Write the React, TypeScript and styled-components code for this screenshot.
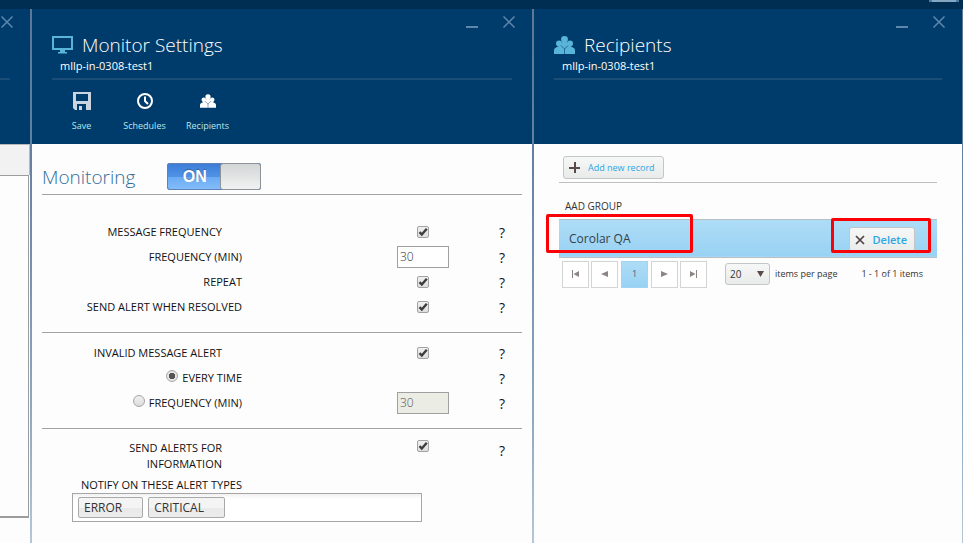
import React, { useId, useState } from "react";
import styled, { createGlobalStyle, css } from "styled-components";

const Global = createGlobalStyle`
  *, *::before, *::after { box-sizing: border-box; }
  html, body, #root { height: 100%; }
  body {
    margin: 0;
    overflow: hidden;
    background: #fdfdfd;
    color: #111;
    font-family: "Open Sans", "Noto Sans", sans-serif;
    font-size: 12px;
    line-height: 16px;
  }
  button, input, select { font: inherit; color: inherit; margin: 0; }
  button { cursor: pointer; }
`;

const Page = styled.div`
  display: grid;
  grid-template-rows: 9px 1fr;
  min-height: 100%;
`;

const TopBar = styled.div`
  display: flex;
  justify-content: flex-end;
  padding-right: 4px;
  background: #002e53;
`;

const TopHandle = styled.span`
  width: 30px;
  height: 2px;
  background: #84a5c4;
  border: solid #4f7ba3;
  border-width: 0 3px;
`;

const Blades = styled.div`
  display: grid;
  grid-template-columns: 30px 2px minmax(0, 500fr) 2px minmax(0, 428fr) 1px;
`;

const Divider = styled.div`
  background: linear-gradient(#5d7896 0%, #617f9f 24%, #7089ac 40%, #90abc2 78%, #b5c6d5 100%);
`;

const Blade = styled.section`
  display: flex;
  flex-direction: column;
  min-width: 0;
`;

const Header = styled.header`
  display: flex;
  flex-direction: column;
  height: 135px;
  padding: 0 20px;
  background: #003c6b;
  color: #fff;
`;

const WindowButtons = styled.div`
  display: flex;
  justify-content: flex-end;
  gap: 23px;
  height: 24px;
  padding-top: 6px;
  margin-right: -4px;
`;

const IconButton = styled.button`
  width: 14px;
  height: 14px;
  padding: 0;
  border: 0;
  background: none;
  color: #5f87ab;
  svg { display: block; }
`;

const TitleRow = styled.div`
  display: flex;
  align-items: center;
  gap: 9px;
  height: 24px;
`;

const Title = styled.h2`
  margin: 0;
  font-size: 19px;
  line-height: 24px;
  font-weight: 300;
  white-space: nowrap;
`;

const Subtitle = styled.div`
  height: 23px;
  padding-left: 8px;
  font-size: 11px;
  line-height: 18px;
  font-weight: 500;
  border-bottom: 2px solid #1a4e79;
`;

const Commands = styled.nav`
  display: flex;
  padding-top: 12px;
  margin-left: -2px;
`;

const Command = styled.button`
  display: flex;
  flex-direction: column;
  align-items: center;
  gap: 9px;
  width: 63px;
  padding: 0;
  border: 0;
  background: none;
  color: #b4e6ee;
  font-size: 9px;
  line-height: 14px;
  svg { display: block; }
`;

const PrevHeader = styled(Header)`
  padding: 0 20px 0 0;
`;

const PrevClose = styled.div`
  display: flex;
  width: 30px;
  height: 69px;
  padding: 6px 0 0;
`;

const PrevRule = styled.div`
  width: 10px;
  height: 2px;
  background: #1a4e79;
`;

const PrevStrip = styled.div`
  height: 31px;
  background: #f2f2f2;
  border: solid #b8b8b8;
  border-width: 1px 1px 0 0;
`;

const PrevBox = styled.div`
  flex: 0 1 343px;
  margin-right: 1px;
  border: solid #9c9c9c;
  border-width: 1px 1px 2px 0;
`;

const Form = styled.form`
  padding: 0 10px;
  font-size: 11px;
`;

const MonitorBar = styled.div`
  display: flex;
  align-items: center;
  gap: 32px;
  height: 51px;
  padding-top: 16px;
  border-bottom: 1px solid #a3a3a3;
`;

const MonitorTitle = styled.h3`
  margin: 0;
  color: #2f6d9c;
  font-size: 19px;
  line-height: 26px;
  font-weight: 300;
`;

const Toggle = styled.label`
  position: relative;
  display: grid;
  grid-template-columns: 53px 41px;
  width: 94px;
  height: 27px;
  margin-bottom: 1px;
  border-radius: 3px;
  background: linear-gradient(#3b7bd6 0%, #4f93e6 50%, #69aaf5 51%, #86bdfb 100%);
  color: #fff;
  font: bold 16px/27px "Liberation Sans", sans-serif;
  box-shadow: inset 0 0 0 1px #5c83b5;
  cursor: pointer;
  input { position: absolute; inset: 0; opacity: 0; margin: 0; }
`;

const ToggleText = styled.span`
  padding-left: 2px;
  text-align: center;
  text-shadow: 0 -1px 1px rgba(0, 0, 0, 0.3);
`;

const Knob = styled.span`
  border: 1px solid #8f9398;
  border-radius: 3px;
  background: linear-gradient(#d3d6d6, #f1f2f2);
`;

const Group = styled.div<{ $gap?: number; $last?: boolean }>`
  padding: ${(p) => p.$gap ?? 7}px 0 13px;
  border-bottom: ${(p) => (p.$last ? "0" : "1px solid #a3a3a3")};
`;

const Row = styled.div<{ $tall?: boolean }>`
  display: grid;
  grid-template-columns: minmax(0, 200fr) minmax(0, 207fr) minmax(0, 73fr);
  align-items: ${(p) => (p.$tall ? "start" : "center")};
  min-height: 25px;
`;

const LabelCell = styled.div<{ $main?: boolean }>`
  display: flex;
  align-items: center;
  justify-content: flex-end;
  gap: 4px;
  padding-right: ${(p) => (p.$main ? 20 : 0)}px;
  text-align: right;
  white-space: nowrap;
`;

const ControlCell = styled.div`
  display: grid;
  justify-self: end;
  justify-items: center;
  width: 52px;
`;

const Help = styled.button`
  justify-self: end;
  padding: 2px 0 0;
  margin-right: 17px;
  border: 0;
  background: none;
  font-size: 14px;
  line-height: 18px;
`;

const NumberBox = styled.input`
  width: 52px;
  height: 22px;
  padding: 0 2px;
  border: 1px solid #a0a0a0;
  background: #fff;
  color: #333;
  font-size: 12px;
  font-weight: 300;
  &:disabled { background: #ebece4; color: #555; }
`;

const CheckWrap = styled.span`
  display: grid;
  width: 12px;
  height: 12px;
  > * { grid-area: 1 / 1; }
  svg { pointer-events: none; margin: 1px; }
`;

const CheckInput = styled.input`
  appearance: none;
  width: 12px;
  height: 12px;
  border: 1px solid #a2a2a2;
  border-radius: 2px;
  background: linear-gradient(#f0f0f0, #dedede);
`;

const RadioInput = styled.input`
  appearance: none;
  width: 12px;
  height: 12px;
  margin-bottom: 4px;
  border: 1px solid #a6a6a6;
  border-radius: 50%;
  background: linear-gradient(#f0f0f0, #dcdcdc);
  &:checked { background: radial-gradient(circle, #555 0 3px, #e6e6e6 3px); }
`;

const NotifyLabel = styled.div`
  width: 41.6667%;
  padding-top: 5px;
  text-align: right;
  white-space: nowrap;
`;

const TagBox = styled.div`
  display: flex;
  gap: 5px;
  width: 73%;
  height: 29px;
  margin-left: 30px;
  padding: 3px 5px;
  border: 1px solid #a6a6a6;
  background: linear-gradient(#f1f1f1, #fff 5px);
`;

const softButton = css`
  border: 1px solid #c4c6c6;
  border-radius: 3px;
  background: linear-gradient(#f6f7f7, #e9ebeb);
`;

const Tag = styled.button`
  padding: 0 20px 0 5px;
  border: 1px solid #a9a9a9;
  border-radius: 2px;
  background: linear-gradient(#f4f4f4 50%, #e9e9e9 51%, #ececec);
  color: #333;
  font-size: 12px;
  line-height: 19px;
`;

const Grid = styled.div`
  padding: 12px 25px 0;
`;

const GridTools = styled.div`
  height: 27px;
  padding-left: 4px;
  border-bottom: 1px solid #bfbfbf;
`;

const AddButton = styled.button`
  ${softButton}
  display: flex;
  align-items: center;
  gap: 8px;
  height: 23px;
  padding: 0 8px 0 5px;
  color: #2da6e4;
  font-size: 9px;
  white-space: nowrap;
`;

const Table = styled.table`
  width: 100%;
  border-collapse: collapse;
`;

const Th = styled.th`
  height: 36px;
  padding: 11px 6px 1px;
  color: #333;
  font-size: 10px;
  font-weight: 400;
  text-align: left;
`;

const Td = styled.td<{ $end?: boolean }>`
  position: relative;
  height: 38px;
  padding: ${(p) => (p.$end ? "4px 22px 0 0" : "1px 10px 0")};
  border: solid #b9c0c4;
  border-width: 1px 0;
  background: linear-gradient(#aedcf6, #98d2f3);
  color: #333f48;
  font-weight: 500;
`;

const Highlight = styled.span<{ $end?: boolean }>`
  position: absolute;
  top: ${(p) => (p.$end ? -2 : -6)}px;
  bottom: 4px;
  ${(p) => (p.$end ? "right: 6px; width: 100px;" : "left: -13px; width: 147px;")}
  border: 3px solid #fb0007;
  border-radius: 2px;
  pointer-events: none;
`;

const DeleteButton = styled.button`
  ${softButton}
  display: flex;
  align-items: center;
  gap: 8px;
  height: 26px;
  margin-left: auto;
  padding: 0 7px 0 5px;
  color: #2da6e4;
  font-size: 11px;
  font-weight: 600;
`;

const Pager = styled.div`
  display: flex;
  align-items: center;
  gap: 2px;
  padding: 3px 14px 0 3px;
  font-size: 9px;
  color: #333;
  white-space: nowrap;
`;

const PageButton = styled.button<{ $current?: boolean }>`
  display: grid;
  place-items: center;
  width: 27px;
  height: 27px;
  padding: 0;
  border: 1px solid ${(p) => (p.$current ? "#a0d6f4" : "#d4d4d4")};
  background: ${(p) => (p.$current ? "linear-gradient(#aedcf6, #98d2f3)" : "#fff")};
  color: ${(p) => (p.$current ? "#44606f" : "#8b8584")};
  ${(p) => p.$current && "margin: 0 1px;"}
`;

const SizePicker = styled.label`
  display: flex;
  align-items: center;
  gap: 5px;
  margin-left: 16px;
`;

const SelectWrap = styled.span`
  display: grid;
  align-items: center;
  width: 45px;
  > * { grid-area: 1 / 1; }
  svg { justify-self: end; margin-right: 6px; pointer-events: none; }
`;

const Select = styled.select`
  ${softButton}
  appearance: none;
  width: 45px;
  height: 22px;
  padding: 0 4px;
  font-size: 10px;
`;

const Count = styled.span`
  margin-left: auto;
`;

const CloseIcon = () => (
  <svg width="14" height="14" viewBox="0 0 14 14" fill="none" stroke="currentColor" strokeWidth="1.5">
    <path d="M1.5 1.5l11 11M12.5 1.5l-11 11" />
  </svg>
);

const MinimizeIcon = () => (
  <svg width="14" height="14" viewBox="0 0 14 14">
    <path d="M1 11h12v2H1z" fill="currentColor" />
  </svg>
);

const MonitorIcon = () => (
  <svg width="21" height="18" viewBox="0 0 21 18" fill="#59b4d9">
    <path fillRule="evenodd" d="M0 0h21v14H0zM2 2v10h17V2z" />
    <path d="M8 14h5v2h2v1.5H6V16h2z" />
  </svg>
);

const PeopleIcon = ({ width = 21, height = 18, fill = "#59b4d9", line = "#003c6b" }) => (
  <svg width={width} height={height} viewBox="0 0 21 18" fill={fill}>
    <circle cx="5" cy="7.5" r="3" />
    <circle cx="16" cy="7.5" r="3" />
    <path d="M0 18v-4Q0 12 3 11l2-1h2l3.500 3v5zM21 18v-4Q21 12 18 11l-2-1h-2l-3.500 3v5z" />
    <path
      d="M10.500 0a3.400 3.400 0 0 1 3.400 3.600q0 2-1.200 3.200 2 .8 1.800 3L10.500 14.500 6.500 9.800q-.2-2.200 1.800-3Q7.100 5.600 7.100 3.600A3.400 3.400 0 0 1 10.500 0z"
    />
    <path d="M7 9.500l3.500 3.500L14 9.500M10.500 13v5" fill="none" stroke={line} strokeWidth="0.6" />
  </svg>
);

const SaveIcon = () => (
  <svg width="18" height="18" viewBox="0 0 18 18">
    <path fill="#c9d6e2" fillRule="evenodd" d="M0 0h18v18H2l-2-2zM3 2v7h12V2zM4 12v6h2v-4h3v4h4v-6z" />
  </svg>
);

const ClockIcon = () => (
  <svg width="18" height="18" viewBox="0 0 18 18" fill="none" stroke="#fff">
    <circle cx="9" cy="9" r="7" strokeWidth="2" />
    <path d="M9 4.500V9l3 3" strokeWidth="2" />
  </svg>
);

const TickIcon = () => (
  <svg width="10" height="10" viewBox="0 0 10 10" fill="none" stroke="#3d3d3d" strokeWidth="2.4">
    <path d="M1.500 5.200l2.300 2.300L8.800 1.800" />
  </svg>
);

const arrowPaths = {
  first: "M0 0h1v8H0zM7 1v6L1.500 4z",
  prev: "M7 1v6L0 4z",
  next: "M0 1v6l7-3z",
  last: "M6 0h1v8H6zM0 1v6l5.500-3z",
  down: "M0 1h7L3.500 7z",
};

const Arrow = ({ kind, color = "currentColor" }: { kind: keyof typeof arrowPaths; color?: string }) => (
  <svg width="7" height="8" viewBox="0 0 7 8" fill={color}>
    <path d={arrowPaths[kind]} />
  </svg>
);

function BladeHeader({ icon, title, children }: { icon: React.ReactNode; title: string; children?: React.ReactNode }) {
  return (
    <Header>
      <WindowButtons>
        <IconButton aria-label="Minimize"><MinimizeIcon /></IconButton>
        <IconButton aria-label="Close"><CloseIcon /></IconButton>
      </WindowButtons>
      <TitleRow>
        {icon}
        <Title>{title}</Title>
      </TitleRow>
      <Subtitle>mllp-in-0308-test1</Subtitle>
      {children}
    </Header>
  );
}

function CheckRow({ label, main, tall }: { label: React.ReactNode; main?: boolean; tall?: boolean }) {
  const id = useId();
  const [on, setOn] = useState(true);
  return (
    <Row $tall={tall}>
      <LabelCell $main={main}><label htmlFor={id}>{label}</label></LabelCell>
      <ControlCell>
        <CheckWrap>
          <CheckInput id={id} type="checkbox" checked={on} onChange={() => setOn(!on)} />
          {on && <TickIcon />}
        </CheckWrap>
      </ControlCell>
      <Help type="button" aria-label="Help">?</Help>
    </Row>
  );
}

export default function App() {
  const [every, setEvery] = useState(true);
  const [enabled, setEnabled] = useState(true);
  return (
    <>
      <Global />
      <Page>
        <TopBar><TopHandle /></TopBar>
        <Blades>
          <Blade>
            <PrevHeader>
              <PrevClose><IconButton aria-label="Close"><CloseIcon /></IconButton></PrevClose>
              <PrevRule />
            </PrevHeader>
            <PrevStrip />
            <PrevBox />
          </Blade>
          <Divider />
          <Blade>
            <BladeHeader icon={<MonitorIcon />} title="Monitor Settings">
              <Commands>
                <Command><SaveIcon />Save</Command>
                <Command><ClockIcon />Schedules</Command>
                <Command><PeopleIcon width={16} height={18} fill="#fff" />Recipients</Command>
              </Commands>
            </BladeHeader>
            <Form>
              <MonitorBar>
                <MonitorTitle>Monitoring</MonitorTitle>
                <Toggle>
                  <input type="checkbox" role="switch" aria-label="Monitoring" checked={enabled} onChange={() => setEnabled(!enabled)} />
                  <ToggleText>ON</ToggleText>
                  <Knob />
                </Toggle>
              </MonitorBar>
              <Group $gap={24}>
                <CheckRow main label="MESSAGE FREQUENCY" />
                <Row>
                  <LabelCell><label htmlFor="msg-frequency">FREQUENCY (MIN)</label></LabelCell>
                  <ControlCell><NumberBox id="msg-frequency" defaultValue="30" /></ControlCell>
                  <Help type="button" aria-label="Help">?</Help>
                </Row>
                <CheckRow label="REPEAT" />
                <CheckRow label="SEND ALERT WHEN RESOLVED" />
              </Group>
              <Group>
                <CheckRow main label="INVALID MESSAGE ALERT" />
                <Row>
                  <LabelCell>
                    <RadioInput id="every" type="radio" name="invalid" checked={every} onChange={() => setEvery(true)} />
                    <label htmlFor="every">EVERY TIME</label>
                  </LabelCell>
                  <span />
                  <Help type="button" aria-label="Help">?</Help>
                </Row>
                <Row>
                  <LabelCell>
                    <RadioInput id="interval" type="radio" name="invalid" checked={!every} onChange={() => setEvery(false)} />
                    <label htmlFor="interval">FREQUENCY (MIN)</label>
                  </LabelCell>
                  <ControlCell><NumberBox aria-label="Invalid message frequency" defaultValue="30" disabled={every} /></ControlCell>
                  <Help type="button" aria-label="Help">?</Help>
                </Row>
              </Group>
              <Group $gap={11} $last>
                <CheckRow main tall label={<>SEND ALERTS FOR<br />INFORMATION</>} />
                <NotifyLabel id="notify">NOTIFY ON THESE ALERT TYPES</NotifyLabel>
                <TagBox role="group" aria-labelledby="notify">
                  <Tag type="button">ERROR</Tag>
                  <Tag type="button">CRITICAL</Tag>
                </TagBox>
              </Group>
            </Form>
          </Blade>
          <Divider />
          <Blade>
            <BladeHeader icon={<PeopleIcon />} title="Recipients" />
            <Grid>
              <GridTools>
                <AddButton>
                  <svg width="11" height="11" viewBox="0 0 11 11"><path d="M5 0h2v11H5zM0 5h11v2H0z" fill="#5a4a48" /></svg>
                  Add new record
                </AddButton>
              </GridTools>
              <Table>
                <thead>
                  <tr><Th colSpan={2}>AAD GROUP</Th></tr>
                </thead>
                <tbody>
                  <tr>
                    <Td>Corolar QA<Highlight /></Td>
                    <Td $end>
                      <DeleteButton>
                        <svg width="10" height="10" viewBox="0 0 10 10" stroke="#4d4442" strokeWidth="1.700"><path d="M1 1l8 8M9 1L1 9" /></svg>
                        Delete
                      </DeleteButton>
                      <Highlight $end />
                    </Td>
                  </tr>
                </tbody>
              </Table>
              <Pager>
                <PageButton aria-label="First page"><Arrow kind="first" /></PageButton>
                <PageButton aria-label="Previous page"><Arrow kind="prev" /></PageButton>
                <PageButton $current>1</PageButton>
                <PageButton aria-label="Next page"><Arrow kind="next" /></PageButton>
                <PageButton aria-label="Last page"><Arrow kind="last" /></PageButton>
                <SizePicker>
                  <SelectWrap>
                    <Select defaultValue="20"><option>10</option><option>20</option><option>50</option></Select>
                    <Arrow kind="down" color="#5a4a48" />
                  </SelectWrap>
                  items per page
                </SizePicker>
                <Count>1 - 1 of 1 items</Count>
              </Pager>
            </Grid>
          </Blade>
          <Divider />
        </Blades>
      </Page>
    </>
  );
}
